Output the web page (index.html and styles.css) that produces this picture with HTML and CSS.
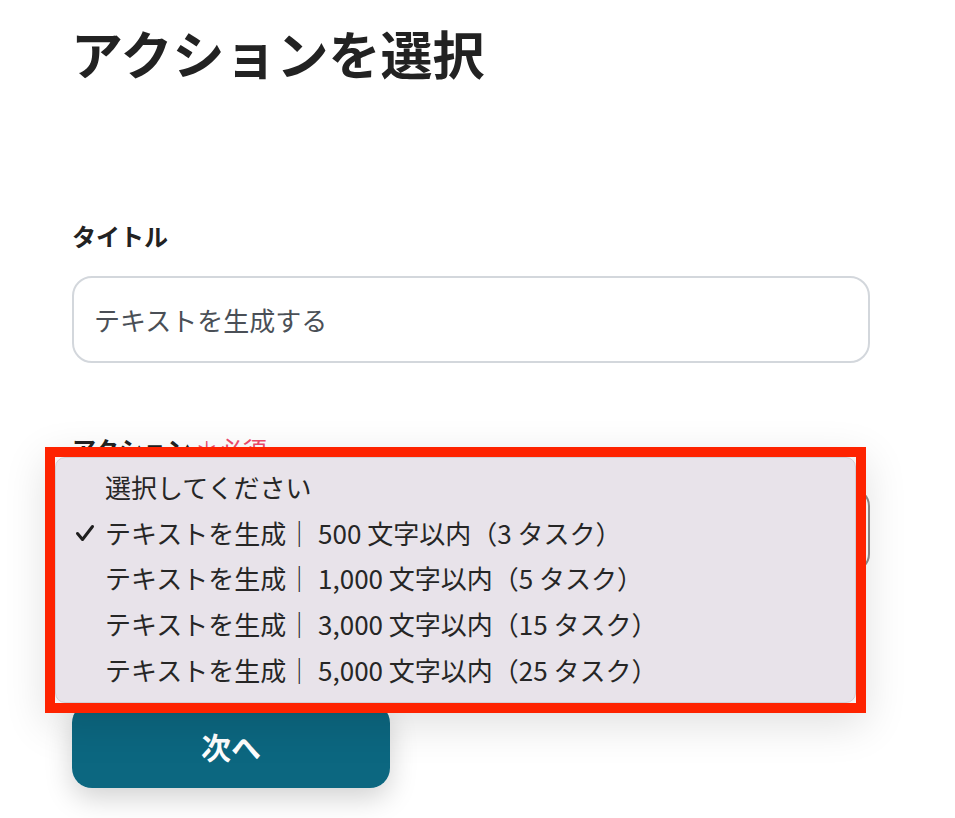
FILE: index.html
```html
<!DOCTYPE html>
<html lang="ja">
<head>
<meta charset="utf-8">
<title>アクションを選択</title>
<link rel="stylesheet" href="styles.css">
</head>
<body>
<main class="page">
  <h1 class="title">アクションを選択</h1>

  <section class="field field-title">
    <label class="label">タイトル</label>
    <div class="input">テキストを生成する</div>
  </section>

  <section class="field field-action">
    <label class="label">アクション<span class="required">＊必須</span></label>
    <div class="select"></div>
  </section>

  <button class="next">次へ</button>

  <div class="highlight">
    <ul class="menu">
      <li class="option">選択してください</li>
      <li class="option checked"><svg class="check" viewBox="0 0 20 18" width="20" height="18"><path d="M2.5 9.5 L7.5 15.5 L17.5 2.5" fill="none" stroke="#1f1f1f" stroke-width="3" stroke-linecap="round" stroke-linejoin="round"/></svg>テキストを生成｜ 500 文字以内（3 タスク）</li>
      <li class="option">テキストを生成｜ 1,000 文字以内（5 タスク）</li>
      <li class="option">テキストを生成｜ 3,000 文字以内（15 タスク）</li>
      <li class="option">テキストを生成｜ 5,000 文字以内（25 タスク）</li>
    </ul>
  </div>
</main>
</body>
</html>
```

FILE: styles.css
```css
* { box-sizing: border-box; }

html, body {
  margin: 0;
  padding: 0;
  background: #ffffff;
}

body {
  font-family: "Noto Sans CJK JP", "Noto Sans", sans-serif;
  color: #222222;
  width: 955px;
  height: 818px;
  overflow: hidden;
}

.page {
  position: relative;
  padding: 0 85px 0 72px;
  display: flex;
  flex-direction: column;
  align-items: flex-start;
}

.title {
  margin: 13px 0 0 -1px;
  font-size: 52px;
  line-height: 80px;
  font-weight: 700;
  color: #222222;
}

.field {
  display: flex;
  flex-direction: column;
  width: 798px;
}

.field-title { margin-top: 126px; }

.label {
  font-size: 24px;
  line-height: 34px;
  font-weight: 700;
  color: #222222;
}

.input {
  margin-top: 23px;
  height: 87px;
  border: 2px solid #d3d7dc;
  border-radius: 20px;
  padding: 0 20px;
  display: flex;
  align-items: center;
  font-size: 26px;
  color: #4a4f56;
}

.field-action { margin-top: 69px; }

.required {
  color: #ef4a6a;
  font-weight: 400;
  margin-left: 4px;
}

.select {
  margin-top: 22px;
  height: 84px;
  border: 2px solid #8c8c8c;
  border-radius: 18px;
}

.next {
  margin-top: 131px;
  width: 318px;
  height: 85px;
  border: none;
  border-radius: 20px;
  background: linear-gradient(#0b5f77, #0c6780 20%, #0c6780);
  color: #ffffff;
  font-family: inherit;
  font-size: 30px;
  font-weight: 700;
  box-shadow: 0 10px 28px rgba(0, 0, 0, 0.18);
}

.highlight {
  position: absolute;
  left: 45px;
  top: 447px;
  width: 821px;
  height: 266px;
  border: 10px solid #fe2300;
  background: #f4f4f4;
  box-shadow: 0 12px 40px rgba(0, 0, 0, 0.12);
}

.menu {
  list-style: none;
  margin: 0;
  padding: 6px 0 11px 0;
  height: 100%;
  background: #e8e3ea;
  border-radius: 10px;
  border: 1px solid #d2cfd4;
}

.option {
  position: relative;
  height: 45.6px;
  display: flex;
  align-items: center;
  padding-left: 49px;
  font-size: 26px;
  color: #262626;
  white-space: pre;
}

.check {
  position: absolute;
  left: 19px;
  top: 14px;
}
```
